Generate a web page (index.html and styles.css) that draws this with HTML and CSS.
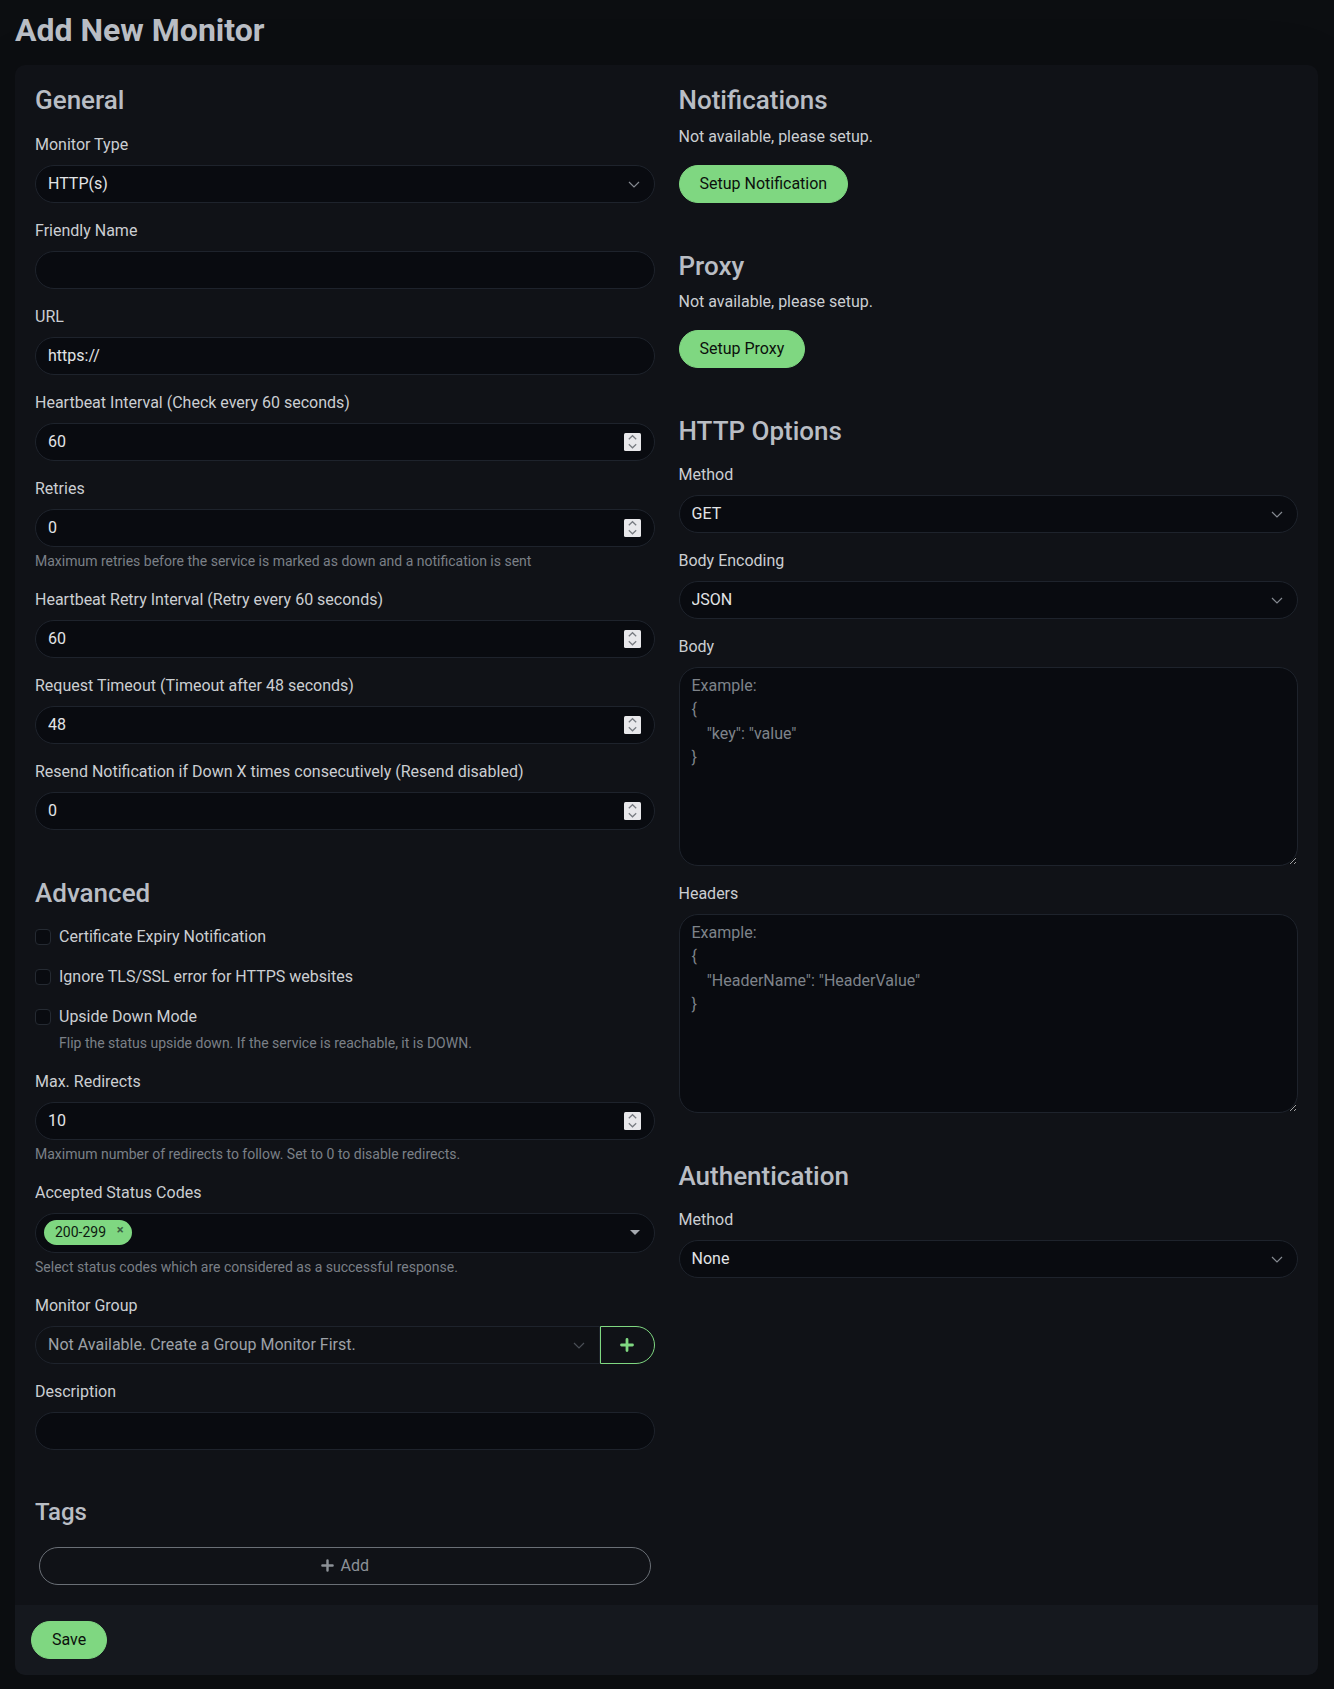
FILE: index.html
```html
<!DOCTYPE html>
<html lang="en">
<head>
<meta charset="utf-8">
<title>Add New Monitor</title>
<link rel="stylesheet" href="styles.css">
</head>
<body>
<div class="page">
  <h1 class="page-title">Add New Monitor</h1>
  <form class="card">
    <div class="cols">
      <div class="col">
        <h2 class="sec-title">General</h2>

        <div class="field">
          <label class="form-label" for="type">Monitor Type</label>
          <div class="select-wrap">
            <select id="type" class="form-control form-select"><option>HTTP(s)</option></select>
            <svg class="chev" width="12" height="7" viewBox="0 0 12 7"><path d="M1 1l5 5 5-5" fill="none" stroke="currentColor" stroke-width="1.2"/></svg>
          </div>
        </div>

        <div class="field">
          <label class="form-label" for="name">Friendly Name</label>
          <input id="name" class="form-control" type="text">
        </div>

        <div class="field">
          <label class="form-label" for="url">URL</label>
          <input id="url" class="form-control" type="text" value="https://">
        </div>

        <div class="field">
          <label class="form-label" for="interval">Heartbeat Interval (Check every 60 seconds)</label>
          <div class="form-control num">
            <input id="interval" class="num-input" type="text" value="60">
            <svg class="spin" width="17" height="18" viewBox="0 0 17 18"><rect width="17" height="18" rx="1.5" fill="#e8e8eb"/><path d="M4.8 6.2l3.7-3.5 3.7 3.5M4.8 11.3l3.7 3.5 3.7-3.5" fill="none" stroke="#777b81" stroke-width="1.2"/></svg>
          </div>
        </div>

        <div class="field">
          <label class="form-label" for="retries">Retries</label>
          <div class="form-control num">
            <input id="retries" class="num-input" type="text" value="0">
            <svg class="spin" width="17" height="18" viewBox="0 0 17 18"><rect width="17" height="18" rx="1.5" fill="#e8e8eb"/><path d="M4.8 6.2l3.7-3.5 3.7 3.5M4.8 11.3l3.7 3.5 3.7-3.5" fill="none" stroke="#777b81" stroke-width="1.2"/></svg>
          </div>
          <div class="form-text">Maximum retries before the service is marked as down and a notification is sent</div>
        </div>

        <div class="field">
          <label class="form-label" for="retry-interval">Heartbeat Retry Interval (Retry every 60 seconds)</label>
          <div class="form-control num">
            <input id="retry-interval" class="num-input" type="text" value="60">
            <svg class="spin" width="17" height="18" viewBox="0 0 17 18"><rect width="17" height="18" rx="1.5" fill="#e8e8eb"/><path d="M4.8 6.2l3.7-3.5 3.7 3.5M4.8 11.3l3.7 3.5 3.7-3.5" fill="none" stroke="#777b81" stroke-width="1.2"/></svg>
          </div>
        </div>

        <div class="field">
          <label class="form-label" for="timeout">Request Timeout (Timeout after 48 seconds)</label>
          <div class="form-control num">
            <input id="timeout" class="num-input" type="text" value="48">
            <svg class="spin" width="17" height="18" viewBox="0 0 17 18"><rect width="17" height="18" rx="1.5" fill="#e8e8eb"/><path d="M4.8 6.2l3.7-3.5 3.7 3.5M4.8 11.3l3.7 3.5 3.7-3.5" fill="none" stroke="#777b81" stroke-width="1.2"/></svg>
          </div>
        </div>

        <div class="field">
          <label class="form-label" for="resend">Resend Notification if Down X times consecutively (Resend disabled)</label>
          <div class="form-control num">
            <input id="resend" class="num-input" type="text" value="0">
            <svg class="spin" width="17" height="18" viewBox="0 0 17 18"><rect width="17" height="18" rx="1.5" fill="#e8e8eb"/><path d="M4.8 6.2l3.7-3.5 3.7 3.5M4.8 11.3l3.7 3.5 3.7-3.5" fill="none" stroke="#777b81" stroke-width="1.2"/></svg>
          </div>
        </div>

        <h2 class="sec-title">Advanced</h2>

        <div class="form-check">
          <input class="check" type="checkbox" id="expiry">
          <label class="check-label" for="expiry">Certificate Expiry Notification</label>
        </div>

        <div class="form-check">
          <input class="check" type="checkbox" id="ignore-tls">
          <label class="check-label" for="ignore-tls">Ignore TLS/SSL error for HTTPS websites</label>
        </div>

        <div class="form-check">
          <input class="check" type="checkbox" id="upside">
          <label class="check-label" for="upside">Upside Down Mode</label>
          <div class="form-text">Flip the status upside down. If the service is reachable, it is DOWN.</div>
        </div>

        <div class="field">
          <label class="form-label" for="redirects">Max. Redirects</label>
          <div class="form-control num">
            <input id="redirects" class="num-input" type="text" value="10">
            <svg class="spin" width="17" height="18" viewBox="0 0 17 18"><rect width="17" height="18" rx="1.5" fill="#e8e8eb"/><path d="M4.8 6.2l3.7-3.5 3.7 3.5M4.8 11.3l3.7 3.5 3.7-3.5" fill="none" stroke="#777b81" stroke-width="1.2"/></svg>
          </div>
          <div class="form-text">Maximum number of redirects to follow. Set to 0 to disable redirects.</div>
        </div>

        <div class="field">
          <label class="form-label">Accepted Status Codes</label>
          <div class="multiselect">
            <span class="ms-tag">200-299<span class="ms-x">×</span></span>
            <span class="ms-caret"></span>
          </div>
          <div class="form-text">Select status codes which are considered as a successful response.</div>
        </div>

        <div class="field">
          <label class="form-label" for="group">Monitor Group</label>
          <div class="input-group">
            <div class="select-wrap grow">
              <select id="group" class="form-control form-select group-select" disabled><option>Not Available. Create a Group Monitor First.</option></select>
              <svg class="chev dim" width="12" height="7" viewBox="0 0 12 7"><path d="M1 1l5 5 5-5" fill="none" stroke="currentColor" stroke-width="1.2"/></svg>
            </div>
            <button type="button" class="btn-plus" aria-label="Add group">
              <svg width="14" height="14" viewBox="0 0 14 14"><path d="M7 1.5v11M1.5 7h11" fill="none" stroke="currentColor" stroke-width="2.8" stroke-linecap="round"/></svg>
            </button>
          </div>
        </div>

        <div class="field">
          <label class="form-label" for="desc">Description</label>
          <input id="desc" class="form-control" type="text">
        </div>

        <div class="tags">
          <h4 class="tags-title">Tags</h4>
          <div class="tags-body">
            <button type="button" class="btn-add">
              <svg width="13" height="13" viewBox="0 0 14 14"><path d="M7 1.5v11M1.5 7h11" fill="none" stroke="currentColor" stroke-width="2.6" stroke-linecap="round"/></svg>
              <span>Add</span>
            </button>
          </div>
        </div>
      </div>

      <div class="col">
        <h2 class="sec-title">Notifications</h2>
        <p class="note">Not available, please setup.</p>
        <div class="actions"><button type="button" class="btn-primary">Setup Notification</button></div>

        <h2 class="sec-title">Proxy</h2>
        <p class="note">Not available, please setup.</p>
        <div class="actions"><button type="button" class="btn-primary">Setup Proxy</button></div>

        <h2 class="sec-title">HTTP Options</h2>

        <div class="field">
          <label class="form-label" for="method">Method</label>
          <div class="select-wrap">
            <select id="method" class="form-control form-select"><option>GET</option></select>
            <svg class="chev" width="12" height="7" viewBox="0 0 12 7"><path d="M1 1l5 5 5-5" fill="none" stroke="currentColor" stroke-width="1.2"/></svg>
          </div>
        </div>

        <div class="field">
          <label class="form-label" for="encoding">Body Encoding</label>
          <div class="select-wrap">
            <select id="encoding" class="form-control form-select"><option>JSON</option></select>
            <svg class="chev" width="12" height="7" viewBox="0 0 12 7"><path d="M1 1l5 5 5-5" fill="none" stroke="currentColor" stroke-width="1.2"/></svg>
          </div>
        </div>

        <div class="field">
          <label class="form-label" for="body">Body</label>
          <textarea id="body" class="form-control area" placeholder="Example:&#10;{&#10;   &#8201;&quot;key&quot;: &quot;value&quot;&#10;}"></textarea>
        </div>

        <div class="field">
          <label class="form-label" for="headers">Headers</label>
          <textarea id="headers" class="form-control area" placeholder="Example:&#10;{&#10;   &#8201;&quot;HeaderName&quot;: &quot;HeaderValue&quot;&#10;}"></textarea>
        </div>

        <h2 class="sec-title">Authentication</h2>

        <div class="field">
          <label class="form-label" for="auth">Method</label>
          <div class="select-wrap">
            <select id="auth" class="form-control form-select"><option>None</option></select>
            <svg class="chev" width="12" height="7" viewBox="0 0 12 7"><path d="M1 1l5 5 5-5" fill="none" stroke="currentColor" stroke-width="1.2"/></svg>
          </div>
        </div>
      </div>
    </div>

    <div class="bottom-bar">
      <button type="submit" class="btn-primary">Save</button>
    </div>
  </form>
</div>
</body>
</html>
```
FILE: styles.css
```css
* {
  box-sizing: border-box;
}

html,
body {
  margin: 0;
}

body {
  background: #0c0e11;
  color: #cbced2;
  font-family: Roboto, "Noto Sans", "Liberation Sans", sans-serif;
  font-size: 16px;
  line-height: 1.5;
}

.page {
  padding: 11px 16px 15px 15px;
}

.page-title {
  margin: 0 0 16px;
  font-size: 32px;
  line-height: 1.2;
  font-weight: 700;
  color: #b9bdc4;
}

.card {
  display: block;
  background: #101217;
  border-radius: 10px;
  padding: 20px 20px 0;
  box-shadow: 0 15px 70px rgba(0, 0, 0, 0.1);
}

.cols {
  display: grid;
  grid-template-columns: 1fr 1fr;
  column-gap: 24px;
}

.col {
  min-width: 0;
}

.sec-title {
  margin: 48px 0 8px;
  font-size: 26px;
  line-height: 1.2;
  font-weight: 500;
  color: #b9bdc4;
}

.col > .sec-title:first-child {
  margin-top: 0;
}

.field {
  margin: 16px 0;
}

.form-label {
  display: block;
  margin-bottom: 8px;
  color: #cbced2;
}

.form-control {
  display: block;
  width: 100%;
  height: 38px;
  margin: 0;
  padding: 6px 12px;
  font: inherit;
  line-height: 24px;
  color: #e2e4e7;
  background: #090b10;
  border: 1px solid #1e232c;
  border-radius: 19px;
  outline: none;
}

.form-select {
  appearance: none;
  -webkit-appearance: none;
  padding-right: 36px;
}

.select-wrap {
  position: relative;
}

.select-wrap.grow {
  flex: 1 1 auto;
  min-width: 0;
}

.chev {
  position: absolute;
  right: 15px;
  top: 50%;
  margin-top: -3px;
  color: #858a91;
  pointer-events: none;
}

.chev.dim {
  color: #4a4f56;
}

.num {
  display: flex;
  align-items: center;
}

.num-input {
  flex: 1 1 auto;
  min-width: 0;
  height: 24px;
  padding: 0;
  border: 0;
  background: transparent;
  color: inherit;
  font: inherit;
  line-height: 24px;
  outline: none;
}

.spin {
  flex: none;
  margin-right: 1px;
}

.form-text {
  margin-top: 4px;
  font-size: 14px;
  line-height: 21px;
  color: #7b8087;
}

.form-check {
  margin: 16px 0;
  padding-left: 24px;
  min-height: 24px;
}

.check {
  appearance: none;
  -webkit-appearance: none;
  float: left;
  width: 16px;
  height: 16px;
  margin: 4px 0 0 -24px;
  background: #090b10;
  border: 1px solid #252a32;
  border-radius: 4px;
}

.check-label {
  color: #cbced2;
}

.multiselect {
  display: flex;
  align-items: center;
  height: 40px;
  padding: 0 14px 0 8px;
  background: #090b10;
  border: 1px solid #1e232c;
  border-radius: 20px;
}

.ms-tag {
  position: relative;
  height: 25px;
  padding: 0 26px 0 11px;
  font-size: 14px;
  line-height: 25px;
  color: #0d1a10;
  background: #7fd781;
  border-radius: 13px;
}

.ms-x {
  position: absolute;
  right: 1px;
  top: 0;
  width: 22px;
  text-align: center;
  font-size: 13px;
  font-weight: 700;
  line-height: 20px;
  color: #3a5e42;
}

.ms-caret {
  margin-left: auto;
  width: 0;
  height: 0;
  border-left: 5px solid transparent;
  border-right: 5px solid transparent;
  border-top: 5px solid #a6aab0;
}

.input-group {
  display: flex;
}

.group-select {
  border-radius: 19px 0 0 19px;
  background: #0f1115;
  color: #9da1a7;
  opacity: 1;
}

.btn-plus {
  flex: none;
  display: flex;
  align-items: center;
  justify-content: center;
  width: 55px;
  height: 38px;
  padding: 0;
  background: transparent;
  color: #7fd781;
  border: 1px solid #7fd781;
  border-radius: 0 19px 19px 0;
}

.tags {
  margin-top: 48px;
  margin-bottom: 16px;
}

.tags-title {
  margin: 0 0 16px;
  font-size: 24px;
  line-height: 1.2;
  font-weight: 500;
  color: #b9bdc4;
}

.tags-body {
  padding: 4px;
}

.btn-add {
  display: flex;
  align-items: center;
  justify-content: center;
  gap: 7px;
  width: 100%;
  height: 38px;
  padding: 6px 20px;
  background: transparent;
  color: #8c9197;
  border: 1px solid #6a6f76;
  border-radius: 19px;
  font: inherit;
}

.note {
  margin: 0 0 16px;
  color: #cbced2;
}

.actions {
  display: flex;
}

.btn-primary {
  display: inline-block;
  height: 38px;
  padding: 6px 20px;
  font: inherit;
  line-height: 24px;
  color: #0b100c;
  background: #7fd781;
  border: 1px solid #7fd781;
  border-radius: 19px;
}

.area {
  height: 199px;
  resize: vertical;
  color-scheme: dark;
}

.area::placeholder {
  color: #7e838a;
  opacity: 1;
}

.bottom-bar {
  display: flex;
  margin: 0 -20px;
  padding: 16px;
  background: #15181e;
  border-radius: 0 0 10px 10px;
}
```
